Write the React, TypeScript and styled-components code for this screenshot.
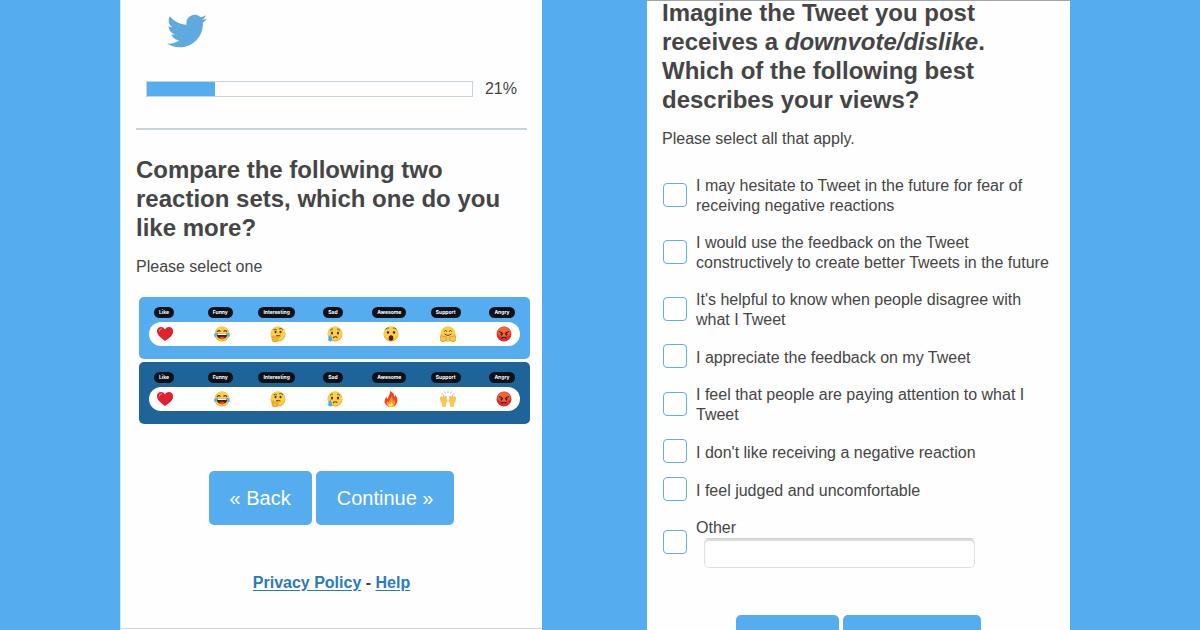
import React from 'react';
import styled, { createGlobalStyle } from 'styled-components';
import { FaTwitter } from 'react-icons/fa';

const GlobalStyle = createGlobalStyle`
  *, *::before, *::after { box-sizing: border-box; }
  body {
    margin: 0;
    overflow: hidden;
    background: #55acee;
    color: #454545;
    font-family: "Liberation Sans", Arial, Helvetica, sans-serif;
    font-size: 16px;
    line-height: 20px;
  }
`;

const Page = styled.main`
  display: grid;
  grid-template-columns: 120fr 422fr 105fr 423fr 130fr;
  height: 100vh;
  overflow: hidden;
`;

const Panel = styled.form<{ $scrolled?: boolean }>`
  display: flex;
  flex-direction: column;
  grid-column: ${({ $scrolled }) => ($scrolled ? 4 : 2)};
  min-width: 0;
  padding: 0 15px;
  background: #fefefe;
  ${({ $scrolled }) =>
    $scrolled ? 'border-top: 1px solid #a3a3a5;' : 'border-left: 1px solid #cde9fb;'}
`;

const Logo = styled.header`
  display: flex;
  padding: 11px 31px 0;
  color: #5ea9dd;
`;

const Progress = styled.div`
  display: flex;
  align-items: center;
  gap: 12px;
  margin-top: 28px;
  padding: 0 10px;
`;

const Track = styled.div`
  flex: 1;
  height: 16px;
  border: 1px solid #c6d4de;
`;

const Fill = styled.div`
  height: 100%;
  background: #55acee;
`;

const Rule = styled.hr`
  width: 100%;
  height: 2px;
  margin: 29px 0 25px;
  border: 0;
  background: #c8d2d9;
`;

const Question = styled.h1<{ $cut?: boolean }>`
  margin: ${({ $cut }) => ($cut ? '-3px' : '0')} 0 15px;
  font-size: 24px;
  font-weight: 700;
  line-height: 29px;
`;

const Hint = styled.p`
  margin: 0;
`;

const ReactionSets = styled.fieldset`
  display: flex;
  flex-direction: column;
  gap: 3px;
  min-width: 0;
  margin: 20px -3px 0 3px;
  padding: 0;
  border: 0;
`;

const ReactionSet = styled.label<{ $tone: string }>`
  display: flex;
  flex-direction: column;
  gap: 4px;
  padding: 10px 10px 13px;
  border-radius: 5px;
  background: ${({ $tone }) => $tone};
  cursor: pointer;
`;

const SetRadio = styled.input`
  appearance: none;
  width: 0;
  height: 0;
  margin: 0 0 -4px;
`;

const Names = styled.span`
  display: flex;
  justify-content: space-between;
  margin: 0 -2px 0 -5px;
`;

const NameCell = styled.span`
  display: flex;
  justify-content: center;
  width: 40px;
`;

const Name = styled.span`
  padding: 0 5px;
  border-radius: 6px;
  background: #0a1118;
  color: #fff;
  font-family: Inter, sans-serif;
  font-size: 5px;
  font-weight: 700;
  line-height: 11px;
`;

const Faces = styled.span`
  display: flex;
  align-items: center;
  justify-content: space-between;
  height: 24px;
  padding: 0 8px;
  border-radius: 12px;
  background: #fff;
`;

const Actions = styled.div`
  display: flex;
  justify-content: center;
  gap: 4px;
  margin-top: 47px;
`;

const Button = styled.button`
  height: 54px;
  padding: 0 21px;
  border: 0;
  border-radius: 5px;
  background: #55acee;
  color: #fff;
  font: inherit;
  font-size: 20px;
  white-space: nowrap;
  cursor: pointer;
`;

const Footer = styled.footer`
  margin: 48px -15px 0;
  padding-bottom: 35px;
  border-bottom: 1px solid #ccd5da;
  font-weight: 700;
  text-align: center;
`;

const FooterLink = styled.a`
  color: #2b7bb9;
  text-decoration: underline;
  text-underline-offset: 2px;
`;

const Options = styled.fieldset`
  display: flex;
  flex-direction: column;
  gap: 14px;
  min-width: 0;
  margin: 24px 0 0;
  padding: 0;
  border: 0;
`;

const Option = styled.div`
  display: flex;
  align-items: center;
  gap: 9px;
  padding-left: 1px;
`;

const Checkbox = styled.input`
  appearance: none;
  flex: none;
  width: 24px;
  height: 24px;
  margin: 0;
  border: 1px solid #5fb0dd;
  border-radius: 4px;
  background: #fff;
  &:checked { background: #55acee; }
`;

const OptionLabel = styled.label`
  padding-top: 3px;
`;

const OtherField = styled.div`
  display: flex;
  flex: 1;
  flex-direction: column;
`;

const OtherInput = styled.input`
  width: 271px;
  max-width: 100%;
  height: 30px;
  margin-left: 8px;
  padding: 0 8px;
  border: 1px solid #e0e0e0;
  border-top-color: #cfcfcf;
  border-radius: 5px;
  background: #fff;
  box-shadow: inset 0 2px 1px #dcdcdc;
  font: inherit;
`;

const Face = ({ children, edge = '#f0a92c' }: { children: React.ReactNode; edge?: string }) => (
  <>
    <circle cx="16" cy="16" r="15" fill={edge} />
    <circle cx="16" cy="15" r="14" fill="#fdd04a" />
    {children}
  </>
);

const drawings: Record<string, React.ReactNode> = {
  heart: (
    <>
      <path d="M16 30C8 24 0 18 0 10 0 1 12-1 16 7 20-1 32 1 32 10c0 8-8 14-16 20z" fill="#e3202b" />
      <path d="M4 10c0-4 4-6 7-4-3 0-5 2-6 6z" fill="#ff8d88" />
      <path d="M16 30c8-6 16-12 16-20-3 9-11 14-16 20z" fill="#b9101d" />
    </>
  ),
  joy: (
    <Face>
      <path d="M6 12q3-5 7-1M19 11q4-4 7 1" fill="none" stroke="#5b3413" strokeWidth="2.2" />
      <path d="M5 15h22c0 15-22 15-22 0z" fill="#54210f" />
      <path d="M7 15h18v3H7z" fill="#fff" />
      <path d="M10 24q6-5 12 0-6 5-12 0z" fill="#ec4b42" />
      <path d="M6 13c-5 1-7 5-5 8s6 1 5-8zM26 13c5 1 7 5 5 8s-6 1-5-8z" fill="#4fb2ed" />
    </Face>
  ),
  think: (
    <Face>
      <path d="M7 8q4-3 7 0M18 6q5-3 8 2" fill="none" stroke="#7b4a17" strokeWidth="2" />
      <ellipse cx="11" cy="12" rx="2" ry="2.6" fill="#4b2a13" />
      <ellipse cx="21" cy="12" rx="2" ry="2.6" fill="#4b2a13" />
      <path d="M12 20q5-3 9 0" fill="none" stroke="#6b3b14" strokeWidth="2" />
      <path d="M5 21c1-3 3-2 3 2l10-3c3 0 2 3-3 4 3 5-1 8-6 8-5 0-6-5-4-11z" fill="#f6b52f" stroke="#c97e18" />
    </Face>
  ),
  sad: (
    <Face>
      <path d="M6 9q3-3 6-3M20 6q3 0 6 3" fill="none" stroke="#7b4a17" strokeWidth="2" />
      <ellipse cx="10" cy="14" rx="2.2" ry="3" fill="#4b2a13" />
      <ellipse cx="22" cy="14" rx="2.2" ry="3" fill="#4b2a13" />
      <path d="M12 24q5-5 9 0" fill="none" stroke="#6b3b14" strokeWidth="2.2" />
      <path d="M7 17c-3 5-6 8-4 12 3 4 8 1 7-4-1-3-2-5-3-8z" fill="#48aeea" />
    </Face>
  ),
  wow: (
    <Face>
      <path d="M5 7q3-4 7-3M20 4q4-1 7 3" fill="none" stroke="#7b4a17" strokeWidth="2" />
      <circle cx="10" cy="13" r="3.2" fill="#fff" />
      <circle cx="22" cy="13" r="3.2" fill="#fff" />
      <circle cx="10" cy="13" r="2.6" fill="#3d2010" />
      <circle cx="22" cy="13" r="2.6" fill="#3d2010" />
      <ellipse cx="16" cy="24" rx="4.6" ry="5.6" fill="#54200f" />
    </Face>
  ),
  hug: (
    <Face>
      <path d="M8 11q3-4 6 0M18 11q3-4 6 0" fill="none" stroke="#6b3b14" strokeWidth="2" />
      <path d="M9 16q7 6 14 0" fill="none" stroke="#6b3b14" strokeWidth="2" />
      <path d="M1 20c2-3 4-1 4 1 5-2 9 0 8 5-1 6-9 6-12 3-2-3-1-6 0-9zM31 20c-2-3-4-1-4 1-5-2-9 0-8 5 1 6 9 6 12 3 2-3 1-6 0-9z" fill="#fbc843" stroke="#cf8a1e" strokeWidth="1.4" />
    </Face>
  ),
  angry: (
    <>
      <circle cx="16" cy="16" r="15" fill="#d9302f" />
      <ellipse cx="16" cy="12" rx="13" ry="10" fill="#f0663a" />
      <path d="M6 11l8 4M26 11l-8 4" stroke="#4f150d" strokeWidth="2.2" />
      <circle cx="11" cy="17" r="2.3" fill="#4f150d" />
      <circle cx="21" cy="17" r="2.3" fill="#4f150d" />
      <path d="M11 25q5-5 10 0" fill="none" stroke="#4f150d" strokeWidth="2.2" />
    </>
  ),
  fire: (
    <>
      <path d="M14 0c8 4 9 8 8 12 2-1 2-3 2-5 4 5 6 10 4 16-2 6-7 9-12 9S4 28 3 22c0-5 2-8 4-11 0 3 1 4 3 5 0-6 5-9 4-16z" fill="#ee4423" />
      <path d="M17 10c3 5 2 8 3 10 2 0 2-2 2-3 4 5 2 15-6 15S5 25 9 19c0 2 1 3 3 3 0-5 5-7 5-12z" fill="#fb9a25" />
      <path d="M16 20c0 4 5 5 4 9-2 4-8 3-9 0s2-3 2-5c1 0 2 1 2 2 1-2 1-4 1-6z" fill="#ffe45b" />
    </>
  ),
  hands: (
    <>
      <path d="M3 5l4 2M9 1l2 4M16 0v4M23 1l-2 4M29 5l-4 2" stroke="#9fb7df" strokeWidth="1.8" />
      <path d="M1 12l2-1 2 6 1-8 2 0 1 7 2-6 2 1-1 8 2-2 1 2-4 6v6H5v-6c-4-4-4-8-4-13zM31 12l-2-1-2 6-1-8-2 0-1 7-2-6-2 1 1 8-2-2-1 2 4 6v6h6v-6c4-4 4-8 4-13z" fill="#f8c951" stroke="#e3aa35" />
    </>
  ),
};

const Emoji = ({ name }: { name: string }) => (
  <svg width="16" height="16" viewBox="0 0 32 32" aria-hidden="true">
    {drawings[name]}
  </svg>
);

const names = ['Like', 'Funny', 'Interesting', 'Sad', 'Awesome', 'Support', 'Angry'];

const sets = [
  { id: 'classic', tone: '#55acee', faces: ['heart', 'joy', 'think', 'sad', 'wow', 'hug', 'angry'] },
  { id: 'vivid', tone: '#1f6499', faces: ['heart', 'joy', 'think', 'sad', 'fire', 'hands', 'angry'] },
];

const options = [
  'I may hesitate to Tweet in the future for fear of receiving negative reactions',
  'I would use the feedback on the Tweet constructively to create better Tweets in the future',
  "It's helpful to know when people disagree with what I Tweet",
  'I appreciate the feedback on my Tweet',
  'I feel that people are paying attention to what I Tweet',
  "I don't like receiving a negative reaction",
  'I feel judged and uncomfortable',
];

const Navigation = () => (
  <Actions>
    <Button type="button">« Back</Button>
    <Button type="button">Continue »</Button>
  </Actions>
);

export default function App() {
  const progress = 21;
  return (
    <>
      <GlobalStyle />
      <Page>
        <Panel>
          <Logo>
            <FaTwitter size={40} />
          </Logo>
          <Progress>
            <Track>
              <Fill style={{ width: `${progress}%` }} />
            </Track>
            <span>{progress}%</span>
          </Progress>
          <Rule />
          <Question>Compare the following two reaction sets, which one do you like more?</Question>
          <Hint>Please select one</Hint>
          <ReactionSets>
            {sets.map((set) => (
              <ReactionSet key={set.id} $tone={set.tone}>
                <SetRadio type="radio" name="reaction-set" value={set.id} />
                <Names>
                  {names.map((name) => (
                    <NameCell key={name}>
                      <Name>{name}</Name>
                    </NameCell>
                  ))}
                </Names>
                <Faces>
                  {set.faces.map((face) => (
                    <Emoji key={face} name={face} />
                  ))}
                </Faces>
              </ReactionSet>
            ))}
          </ReactionSets>
          <Navigation />
          <Footer>
            <FooterLink href="#privacy">Privacy Policy</FooterLink> -{' '}
            <FooterLink href="#help">Help</FooterLink>
          </Footer>
        </Panel>
        <Panel $scrolled>
          <Question $cut>
            Imagine the Tweet you post receives a <em>downvote/dislike</em>. Which of the following
            best describes your views?
          </Question>
          <Hint>Please select all that apply.</Hint>
          <Options>
            {options.map((text, i) => (
              <Option key={text}>
                <Checkbox type="checkbox" id={`view-${i}`} />
                <OptionLabel htmlFor={`view-${i}`}>{text}</OptionLabel>
              </Option>
            ))}
            <Option>
              <Checkbox type="checkbox" id="view-other" />
              <OtherField>
                <OptionLabel htmlFor="view-other">Other</OptionLabel>
                <OtherInput type="text" aria-label="Other" />
              </OtherField>
            </Option>
          </Options>
          <Navigation />
        </Panel>
      </Page>
    </>
  );
}
